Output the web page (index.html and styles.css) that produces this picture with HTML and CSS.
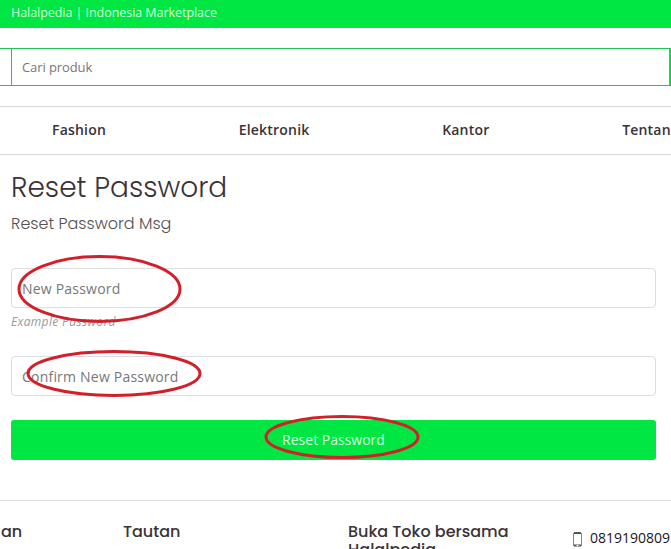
FILE: index.html
```html
<!DOCTYPE html>
<html lang="id">
<head>
<meta charset="utf-8">
<title>Halalpedia | Indonesia Marketplace</title>
<link rel="stylesheet" href="styles.css">
</head>
<body>
<header>
  <div class="topbar">Halalpedia | Indonesia Marketplace</div>
  <form class="search">
    <span class="search-category"></span>
    <input class="search-input" type="text" placeholder="Cari produk" aria-label="Cari produk">
    <span class="search-button"></span>
  </form>
  <nav class="menu">
    <a class="menu-item">Fashion</a>
    <a class="menu-item">Elektronik</a>
    <a class="menu-item">Kantor</a>
    <a class="menu-item">Tentan</a>
  </nav>
</header>
<main class="content">
  <h1 class="title">Reset Password</h1>
  <p class="subtitle">Reset Password Msg</p>
  <form class="reset-form">
    <input class="field" type="password" placeholder="New Password" aria-label="New Password">
    <p class="hint">Example Password</p>
    <input class="field" type="password" placeholder="Confirm New Password" aria-label="Confirm New Password">
    <button class="submit" type="button">Reset Password</button>
  </form>
</main>
<footer class="footer">
  <h2 class="footer-title">an</h2>
  <h2 class="footer-title">Tautan</h2>
  <h2 class="footer-title footer-store">Buka Toko bersama Halalpedia</h2>
  <div class="phone">
    <svg class="phone-icon" width="9" height="15" viewBox="0 0 9 15"><path d="M.5 1v13M8.500 1v13" stroke="#858585"/><path d="M1 1h7M1 13.500h7" stroke="#555" stroke-width="2"/><path d="M3.500 13.500h2" stroke="#fff"/></svg>
    <span>0819190809</span>
  </div>
</footer>
<svg class="marks" width="671" height="549" viewBox="0 0 671 549">
  <ellipse cx="99.500" cy="289" rx="80.500" ry="32.500"/>
  <ellipse cx="114" cy="373.500" rx="86" ry="22"/>
  <ellipse cx="342" cy="437" rx="76" ry="20.500"/>
</svg>
</body>
</html>
```
FILE: styles.css
```css
* { box-sizing: border-box; }
body {
  position: relative;
  margin: 0;
  width: 671px;
  height: 549px;
  overflow: hidden;
  background: #fff;
  color: #3a3237;
  font-family: "Open Sans", sans-serif;
}
.topbar {
  height: 28px;
  padding-left: 11px;
  background: #00e643;
  color: #d4ffdf;
  font-size: 12.5px;
  line-height: 25px;
  letter-spacing: -.05px;
}
.search {
  display: flex;
  height: 38px;
  margin: 20px 0;
  border: solid #1fc655;
  border-width: 1px 0;
}
.search-category { width: 12px; border-right: 1px solid #1fc655; }
.search-input {
  flex: 1;
  min-width: 0;
  padding: 0 10px;
  border: 0;
  font: 13px "Open Sans", sans-serif;
  letter-spacing: -.1px;
}
.search-button { width: 2px; background: #08dd4b; }
input::placeholder { color: #777; opacity: 1; }
.menu {
  display: flex;
  height: 49px;
  padding-left: 52px;
  gap: 132.7px;
  border: solid #d9d9d9;
  border-width: 1px 0;
  font-size: 14px;
  font-weight: 600;
  line-height: 46px;
  letter-spacing: .2px;
  white-space: nowrap;
}
.content { padding: 13px 15px 0 11px; }
.title, .subtitle, .footer-title {
  margin: 0;
  font-family: Poppins, Inter, sans-serif;
}
.title { font-size: 28px; font-weight: 300; line-height: 40px; white-space: nowrap; }
.subtitle { margin-top: 5px; color: #565056; font-size: 16px; font-weight: 300; line-height: 22px; }
.reset-form { display: flex; flex-direction: column; margin-top: 33px; }
.field {
  width: 100%;
  height: 40px;
  padding: 0 10px;
  border: 1px solid #ddd;
  border-radius: 4px;
  font: 14px "Open Sans", sans-serif;
  letter-spacing: .21px;
}
.hint { height: 48px; margin: 0; color: #999; font-size: 12px; font-style: italic; line-height: 27px; letter-spacing: .35px; }
.submit {
  height: 40px;
  margin-top: 24px;
  padding: 0 0 2px;
  border: 0;
  border-radius: 3px;
  background: #00e643;
  color: #d4ffdf;
  font: 14px "Open Sans", sans-serif;
}
.footer {
  display: grid;
  grid-template-columns: 122px 225px 225px 98px;
  margin-top: 40px;
  padding: 22px 0 0 1px;
  border-top: 1px solid #ddd;
}
.footer-title { font-size: 16px; font-weight: 500; line-height: 18px; }
.footer-store { width: 180px; }
.phone { display: flex; gap: 8px; color: #20151f; font-size: 14px; line-height: 29px; }
.phone-icon { flex: none; margin-top: 9px; }
.marks { position: absolute; inset: 0; pointer-events: none; }
.marks ellipse { fill: none; stroke: #d2202b; stroke-width: 3; }
```
